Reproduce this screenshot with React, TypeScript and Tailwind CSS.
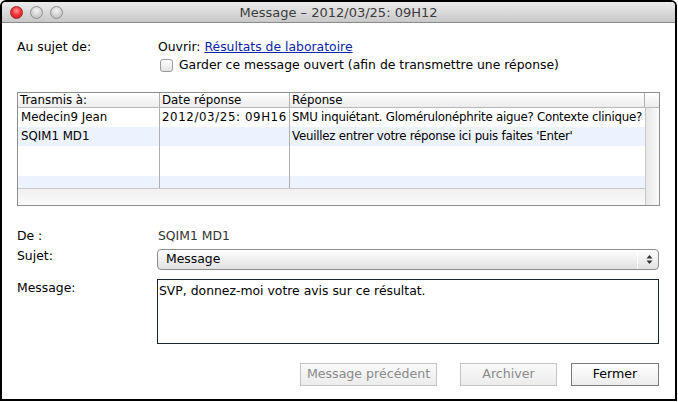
import React from "react";

const font = { fontFamily: '"DejaVu Sans", "Noto Sans", sans-serif' };

function Light({ red }: { red?: boolean }) {
  return red ? (
    <div className="w-[13px] h-[13px] rounded-full border border-[#a3272b] bg-[radial-gradient(circle_at_50%_35%,#ff9b9b_0%,#f2363a_45%,#c8161c_100%)]" />
  ) : (
    <div className="w-[13px] h-[13px] rounded-full border border-[#8f8f8f] bg-[radial-gradient(circle_at_50%_35%,#f4f4f4_0%,#d4d4d4_50%,#b6b6b6_100%)]" />
  );
}

export default function App() {
  const rows = [
    { a: "Medecin9 Jean", d: "2012/03/25: 09H16", r: "SMU inquiétant. Glomérulonéphrite aigue? Contexte clinique?", h: "h-[19px]", bg: "bg-white" },
    { a: "SQIM1 MD1", d: "", r: "Veuillez entrer votre réponse ici puis faites 'Enter'", h: "h-[19px]", bg: "bg-[#edf3fe]" },
    { a: "", d: "", r: "", h: "h-[30px]", bg: "bg-white" },
    { a: "", d: "", r: "", h: "h-[12px]", bg: "bg-[#edf3fe]" },
  ];
  return (
    <div className="w-[678px] h-[402px] bg-white text-[12.4px] text-black overflow-hidden" style={font}>
      <div className="w-[677px] h-[401px] border-2 border-black rounded-t-[6px] flex flex-col overflow-hidden">
        {/* title bar */}
        <div className="h-[21px] shrink-0 bg-[linear-gradient(#ececec,#c8c8c8)] border-b border-[#8a8a8a] flex items-center relative">
          <div className="flex gap-[7px] pl-[8px]">
            <Light red />
            <Light />
            <Light />
          </div>
          <div className="absolute inset-0 flex items-center justify-center text-[#3c3c3c] text-[13px] leading-none pt-[1px]">
            Message – 2012/03/25: 09H12
          </div>
        </div>

        {/* body */}
        <div className="flex flex-col pl-[15px] pr-[16px]">
          <div className="flex mt-[16px] h-[17px] items-center">
            <div className="w-[141px]">Au sujet de:</div>
            <div>
              Ouvrir: <span className="underline text-[#0b24a8]">Résultats de laboratoire</span>
            </div>
          </div>
          <div className="flex items-center mt-[1px] h-[17px] pl-[143px]">
            <div className="w-[13px] h-[13px] rounded-[3px] border border-[#9a9a9a] bg-[linear-gradient(#ffffff,#e4e4e4)] mr-[6px]" />
            <div>Garder ce message ouvert (afin de transmettre une réponse)</div>
          </div>

          {/* table */}
          <div className="mt-[18px] w-[643px] h-[114px] border border-[#8e8e8e] flex flex-col text-[11.8px] relative">
            <div className="h-[15px] flex bg-[linear-gradient(#ffffff,#ececec)] border-b border-[#b8b8b8] leading-[15px]">
              <div className="w-[142px] pl-[2px] border-r border-[#b0b0b0]">Transmis à:</div>
              <div className="w-[130px] pl-[2px] border-r border-[#b0b0b0]">Date réponse</div>
              <div className="w-[355px] pl-[2px] border-r border-[#b0b0b0]">Réponse</div>
              <div className="flex-1" />
            </div>
            <div className="flex flex-1">
              <div className="w-[627px] flex flex-col">
                {rows.map((row, i) => (
                  <div key={i} className={`flex ${row.h} ${row.bg} items-center`}>
                    <div className="w-[142px] h-full pl-[3px] border-r border-[#b0b0b0] flex items-center">{row.a}</div>
                    <div className="w-[130px] h-full pl-[2px] border-r border-[#b0b0b0] flex items-center whitespace-nowrap tracking-[0.6px]">{row.d}</div>
                    <div className="flex-1 h-full pl-[2px] flex items-center whitespace-nowrap overflow-hidden tracking-[-0.25px]">{row.r}</div>
                  </div>
                ))}
                <div className="flex-1 bg-[linear-gradient(#f0f0f0,#fafafa)] border-t border-[#c8c8c8]" />
              </div>
              <div className="flex-1 bg-[linear-gradient(90deg,#e8e8e8,#fafafa)] border-l border-[#c8c8c8]" />
            </div>
          </div>

          {/* De */}
          <div className="flex mt-[22px] h-[17px] items-center">
            <div className="w-[141px]">De :</div>
            <div className="text-[#333]">SQIM1 MD1</div>
          </div>
          <div className="flex mt-[4px] items-start">
            <div className="w-[140px] -mt-[2px]">Sujet:</div>
            <div className="flex-1 h-[21px] rounded-[4px] border border-[#8c8c8c] bg-[linear-gradient(#ffffff,#f0f0f0_50%,#e2e2e2)] flex items-center pl-[8px] pr-[5px]">
              <div className="flex-1">Message</div>
              <div className="w-px h-[18px] bg-white mr-[8px]" />
              <svg width="7" height="11" viewBox="0 0 7 11">
                <path d="M3.5 1 L6.5 4.5 L0.5 4.5 Z" fill="#333" />
                <path d="M3.5 10 L6.5 6.5 L0.5 6.5 Z" fill="#333" />
              </svg>
            </div>
          </div>
          <div className="flex mt-[9px] items-start">
            <div className="w-[140px]">Message:</div>
            <div className="flex-1 h-[65px] border border-[#1f2733] px-[1px] pt-[2px]">
              SVP, donnez-moi votre avis sur ce résultat.
            </div>
          </div>

          {/* buttons */}
          <div className="flex justify-end mt-[19px] text-[12.6px]">
            <div className="w-[137px] h-[23px] border border-[#c4c4c4] bg-[linear-gradient(#fafafa,#ececec)] text-[#8a8a8a] flex items-center justify-center">
              Message précédent
            </div>
            <div className="w-[97px] h-[23px] ml-[23px] border border-[#c4c4c4] bg-[linear-gradient(#fafafa,#ececec)] text-[#8a8a8a] flex items-center justify-center">
              Archiver
            </div>
            <div className="w-[88px] h-[23px] ml-[14px] border border-[#7a7a7a] bg-[linear-gradient(#ffffff,#ececec)] text-black flex items-center justify-center">
              Fermer
            </div>
          </div>
        </div>
      </div>
    </div>
  );
}
